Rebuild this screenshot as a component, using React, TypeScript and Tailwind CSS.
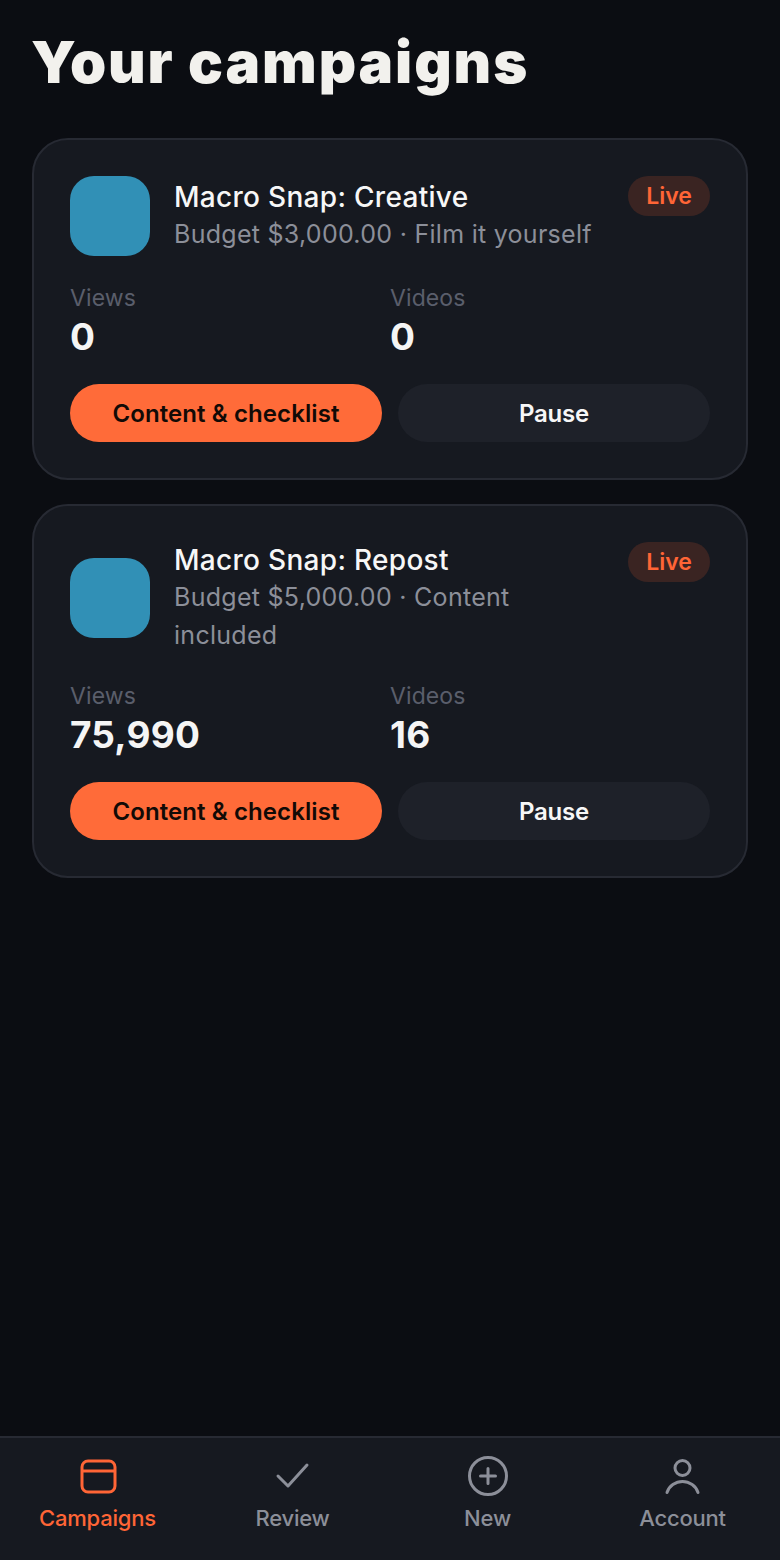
import React from "react";

function Stat({ label, value }: { label: string; value: string }) {
  return (
    <div className="flex flex-col">
      <span className="text-[23px] leading-[36px] text-[#5a5e6b] font-['Inter',sans-serif] tracking-[0.1px]">{label}</span>
      <span className="text-[37px] leading-[42px] font-bold text-[#f5f5f5] font-['Inter',sans-serif] tracking-[0.2px]">{value}</span>
    </div>
  );
}

function Card({ title, sub, views, videos }: { title: string; sub: string; views: string; videos: string }) {
  return (
    <div className="rounded-[36px] border-2 border-[#272a33] bg-[#161920] p-[36px]">
      <div className="flex items-center">
        <div className="w-[80px] h-[80px] rounded-[24px] bg-[#3190b6] shrink-0" />
        <div className="ml-[24px] flex-1 min-w-0 pr-[24px]">
          <div className="text-[28px] leading-[36px] font-medium text-[#f7f7f7] font-['Inter',sans-serif] tracking-[0.3px]">{title}</div>
          <div className="text-[25px] leading-[38px] text-[#8c8f99] font-['Inter',sans-serif] tracking-[0.28px]">{sub}</div>
        </div>
        <div className="self-start shrink-0 w-[82px] h-[40px] rounded-full bg-[#3a2422] flex items-center justify-center text-[23px] font-semibold text-[#ff6536] font-['Inter',sans-serif]">Live</div>
      </div>
      <div className="grid grid-cols-2 mt-[24px]">
        <Stat label="Views" value={views} />
        <Stat label="Videos" value={videos} />
      </div>
      <div className="grid grid-cols-2 gap-[16px] mt-[26px]">
        <button className="h-[58px] pt-[2px] rounded-full bg-[#ff6b39] text-[#120a06] text-[24px] font-semibold font-['Inter',sans-serif] tracking-[0.1px]">Content &amp; checklist</button>
        <button className="h-[58px] pt-[2px] rounded-full bg-[#1e2129] text-[#f7f7f7] text-[24px] font-semibold font-['Inter',sans-serif] tracking-[-0.2px]">Pause</button>
      </div>
    </div>
  );
}

function NavItem({ label, active, children }: { label: string; active?: boolean; children: React.ReactNode }) {
  return (
    <div className={`flex flex-col items-center ${active ? "text-[#ff6536]" : "text-[#8c8f99]"}`}>
      <div className="w-[44px] h-[44px] flex items-center justify-center">{children}</div>
      <span className="mt-[6px] text-[22px] leading-[28px] font-medium font-['Inter',sans-serif] tracking-[-0.2px]">{label}</span>
    </div>
  );
}

export default function App() {
  return (
    <div className="w-[780px] h-[1560px] bg-[#0b0d12] flex flex-col font-['Inter',sans-serif]">
      <div className="flex-1 px-[32px]">
        <h1 className="mt-[26px] -ml-[1px] text-[58px] leading-[72px] font-black tracking-[1.9px] text-[#f2f1ed]">Your campaigns</h1>
        <div className="mt-[40px] flex flex-col gap-[24px]">
          <Card title="Macro Snap: Creative" sub="Budget $3,000.00 · Film it yourself" views="0" videos="0" />
          <Card title="Macro Snap: Repost" sub="Budget $5,000.00 · Content included" views="75,990" videos="16" />
        </div>
      </div>
      <nav className="h-[124px] border-t-2 border-[#272a33] bg-[#161920] grid grid-cols-4 pt-[16px]">
        <NavItem label="Campaigns" active>
          <svg width="40" height="40" viewBox="0 0 40 40" fill="none" stroke="currentColor" strokeWidth="3">
            <rect x="4" y="5" width="33" height="31" rx="6" />
            <path d="M4 15h33" />
          </svg>
        </NavItem>
        <NavItem label="Review">
          <svg width="40" height="40" viewBox="0 0 40 40" fill="none" stroke="currentColor" strokeWidth="3" strokeLinecap="round" strokeLinejoin="round">
            <path d="M5 20l10 10L34 9" />
          </svg>
        </NavItem>
        <NavItem label="New">
          <svg width="42" height="42" viewBox="0 0 42 42" fill="none" stroke="currentColor" strokeWidth="3" strokeLinecap="round">
            <circle cx="21" cy="21" r="18.500" />
            <path d="M21 13.500v15M13.500 21h15" />
          </svg>
        </NavItem>
        <NavItem label="Account">
          <svg width="40" height="40" viewBox="0 0 40 40" fill="none" stroke="currentColor" strokeWidth="3" strokeLinecap="round">
            <circle cx="19.500" cy="12" r="7.500" />
            <path d="M4 36.500c2-6.500 8.500-11 15.500-11s13.500 4.500 15.500 11" />
          </svg>
        </NavItem>
      </nav>
    </div>
  );
}
